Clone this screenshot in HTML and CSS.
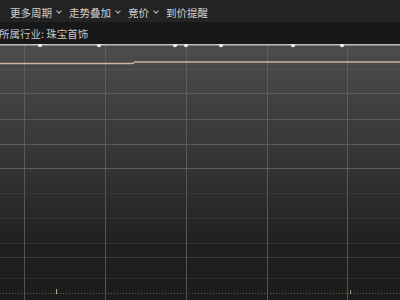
FILE: index.html
```html
<!DOCTYPE html>
<html lang="zh-CN">

<head>
    <meta charset="UTF-8">
    <meta name="viewport" content="width=device-width, initial-scale=1.0">
    <title>分时走势</title>
    <link rel="stylesheet" href="styles.css">
</head>

<body>
    <div class="app">
        <div class="toolbar">
            <span class="menu">更多周期<span class="caret"></span></span>
            <span class="menu">走势叠加<span class="caret"></span></span>
            <span class="menu">竞价<span class="caret"></span></span>
            <span class="menu">到价提醒</span>
        </div>

        <div class="info-row">所属行业: 珠宝首饰</div>

        <div class="chart">
            <svg width="400" height="256" viewBox="0 0 400 256">
                <defs>
                    <linearGradient id="bg" x1="0" y1="0" x2="0" y2="1">
                        <stop offset="0" stop-color="#4c4c4c" />
                        <stop offset="0.45" stop-color="#353535" />
                        <stop offset="0.8" stop-color="#1f1f1f" />
                        <stop offset="1" stop-color="#1b1b1b" />
                    </linearGradient>
                </defs>
                <rect x="0" y="0" width="400" height="256" fill="url(#bg)" />

                <!-- grid -->
                <g stroke="#5c5c5c" stroke-width="1">
                    <line x1="0" y1="25.5" x2="400" y2="25.5" stroke="#4f5358" />
                    <line x1="0" y1="49.5" x2="400" y2="49.5" />
                    <line x1="0" y1="75.5" x2="400" y2="75.5" />
                    <line x1="0" y1="100.5" x2="400" y2="100.5" />
                    <line x1="0" y1="124.5" x2="400" y2="124.5" />
                    <line x1="0" y1="149.5" x2="400" y2="149.5" stroke="#383838" />
                    <line x1="0" y1="174.5" x2="400" y2="174.5" stroke="#333" />
                    <line x1="0" y1="199.5" x2="400" y2="199.5" stroke="#303030" />
                    <line x1="0" y1="213.5" x2="400" y2="213.5" stroke="#3a3a3a" />
                    <line x1="0" y1="234.5" x2="400" y2="234.5" stroke="#2c2c2c" />
                </g>
                <g stroke="#666" stroke-width="1" opacity="0.75">
                    <line x1="24.5" y1="1" x2="24.5" y2="256" />
                    <line x1="105.5" y1="1" x2="105.5" y2="256" />
                    <line x1="186.5" y1="1" x2="186.5" y2="256" />
                    <line x1="267.5" y1="1" x2="267.5" y2="256" />
                    <line x1="347.5" y1="1" x2="347.5" y2="256" />
                </g>

                <!-- price -->
                <polyline points="0,19.5 133,19.5 135,18 400,18" fill="none" stroke="#c9b69a" stroke-width="1.5" />

                <!-- volume baseline -->
                <line x1="0" y1="249.5" x2="400" y2="249.5" stroke="#6b6440" stroke-width="1" stroke-dasharray="1 2" />
                <line x1="56.5" y1="245" x2="56.5" y2="250" stroke="#b8a98a" />
                <line x1="350.5" y1="246" x2="350.5" y2="250" stroke="#9a9070" />

                <!-- top border with markers -->
                <line x1="0" y1="0.75" x2="400" y2="0.75" stroke="#bdbdbd" stroke-width="1.5" />
                <g fill="#e8e8e8">
                    <circle cx="40" cy="1" r="2.2" />
                    <circle cx="99" cy="1" r="2.2" />
                    <circle cx="175" cy="1" r="2.2" />
                    <circle cx="186" cy="1" r="2.2" />
                    <circle cx="221" cy="1" r="2.2" />
                    <circle cx="293" cy="1" r="2.2" />
                    <circle cx="342" cy="1" r="2.2" />
                </g>
            </svg>
        </div>
    </div>
</body>

</html>
```

FILE: styles.css
```css
body {
    margin: 0;
    background: #1b1b1b;
    font-family: "Noto Sans CJK SC", "Noto Sans", sans-serif;
    overflow: hidden;
}

.app {
    width: 400px;
    height: 300px;
    display: flex;
    flex-direction: column;
}

.toolbar {
    height: 22px;
    background: #232323;
    display: flex;
    align-items: center;
    gap: 8px;
    padding: 3px 0 0 10px;
    box-sizing: border-box;
    font-size: 10.5px;
    color: #d0d0d0;
}

.menu {
    display: flex;
    align-items: center;
    white-space: nowrap;
}

.caret {
    width: 3px;
    height: 3px;
    margin: -3px 0 0 5px;
    border-right: 1px solid #bbb;
    border-bottom: 1px solid #bbb;
    transform: rotate(45deg);
}

.info-row {
    height: 22px;
    background: #181818;
    padding: 2px 0 0 0;
    margin-left: -1px;
    box-sizing: border-box;
    font-size: 10.5px;
    line-height: 20px;
    color: #c4c4c4;
    white-space: nowrap;
}

.chart {
    flex: 1;
    overflow: hidden;
}

.chart svg {
    display: block;
}
```
